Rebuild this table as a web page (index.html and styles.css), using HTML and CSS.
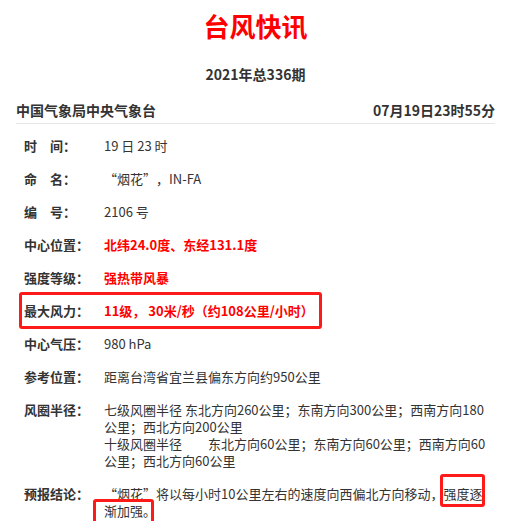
FILE: index.html
```html
<!DOCTYPE html>
<html lang="zh-CN">
<head>
    <meta charset="UTF-8">
    <meta name="viewport" content="width=device-width, initial-scale=1.0">
    <title>台风快讯</title>
    <link rel="stylesheet" href="styles.css">
</head>
<body>
    <div class="container">
        <h1 class="title">台风快讯</h1>
        <div class="issue">2021年总336期</div>
        <div class="header">
            <span>中国气象局中央气象台</span>
            <span>07月19日23时55分</span>
        </div>

        <div class="info">
            <div class="row">
                <div class="label">时　间：</div>
                <div class="value">19 日 23 时</div>
            </div>
            <div class="row">
                <div class="label">命　名：</div>
                <div class="value">“烟花”，IN-FA</div>
            </div>
            <div class="row">
                <div class="label">编　号：</div>
                <div class="value">2106 号</div>
            </div>
            <div class="row">
                <div class="label">中心位置：</div>
                <div class="value red">北纬24.0度、东经131.1度</div>
            </div>
            <div class="row">
                <div class="label">强度等级：</div>
                <div class="value red">强热带风暴</div>
            </div>
            <div class="row marked">
                <div class="label">最大风力：</div>
                <div class="value red">11级， 30米/秒（约108公里/小时）</div>
            </div>
            <div class="row">
                <div class="label">中心气压：</div>
                <div class="value">980 hPa</div>
            </div>
            <div class="row">
                <div class="label">参考位置：</div>
                <div class="value">距离台湾省宜兰县偏东方向约950公里</div>
            </div>
            <div class="row">
                <div class="label">风圈半径：</div>
                <div class="value">
                    七级风圈半径 东北方向260公里；东南方向300公里；西南方向180公里；西北方向200公里<br>
                    十级风圈半径　　东北方向60公里；东南方向60公里；西南方向60公里；西北方向60公里
                </div>
            </div>
            <div class="row">
                <div class="label">预报结论：</div>
                <div class="value">“烟花”将以每小时10公里左右的速度向西偏北方向移动，<span class="mark mark-a">强度逐</span><span class="mark mark-b">渐加强。</span></div>
            </div>
        </div>
    </div>
</body>
</html>
```

FILE: styles.css
```css
/* General Styles */
body {
    font-family: "Noto Sans CJK SC", "Noto Sans", sans-serif;
    background-color: #ffffff;
    color: #333333;
    margin: 0;
    padding: 0;
    text-spacing-trim: space-all;
}

.container {
    padding: 11px 11px 0 16px;
}

/* Title */
.title {
    margin: 0;
    font-size: 26px;
    line-height: 30px;
    font-weight: bold;
    color: #ff0000;
    text-align: center;
}

.issue {
    margin-top: 23px;
    font-size: 14px;
    line-height: 20px;
    font-weight: bold;
    text-align: center;
}

.header {
    display: flex;
    justify-content: space-between;
    margin-top: 16px;
    padding-bottom: 3px;
    font-size: 14px;
    line-height: 20px;
    font-weight: bold;
    border-bottom: 1px solid #e6e6e6;
}

/* Info rows */
.info {
    padding: 13px 5px 0 8px;
    font-size: 13px;
    line-height: 17px;
}

.row {
    display: flex;
    margin-bottom: 16px;
    position: relative;
}

.label {
    width: 80px;
    flex-shrink: 0;
    font-weight: bold;
}

.value {
    flex: 1;
}

.red {
    color: #ff0000;
    font-weight: bold;
}

/* Red annotation boxes */
.marked::after {
    content: "";
    position: absolute;
    left: -5px;
    top: -10px;
    width: 297px;
    height: 31px;
    border: 3px solid #ff1a1a;
    border-radius: 3px;
}

.mark {
    position: relative;
}

.mark::after {
    content: "";
    position: absolute;
    border: 3px solid #ff1a1a;
    border-radius: 3px;
}

.mark-a::after {
    left: -3px;
    right: -3px;
    top: -10px;
    bottom: -4px;
}

.mark-b::after {
    left: -11px;
    right: 2px;
    top: -2px;
    bottom: -4px;
}
```
